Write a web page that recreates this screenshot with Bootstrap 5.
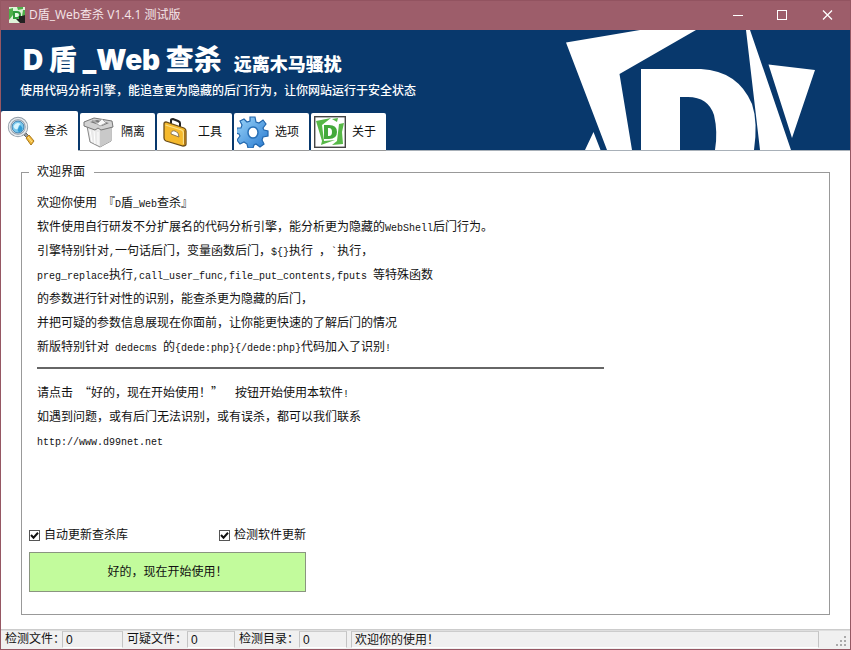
<!DOCTYPE html>
<html lang="zh-CN">
<head>
<meta charset="utf-8">
<meta name="viewport" content="width=device-width, initial-scale=1">
<title>D盾_Web查杀 V1.4.1 测试版</title>
<link href="https://cdn.jsdelivr.net/npm/bootstrap@5.3.0/dist/css/bootstrap.min.css" rel="stylesheet">
<style>
body{font:12px/16px "Liberation Sans","Noto Sans CJK SC",sans-serif;color:#111}
.win{border:1px solid #965763;border-top:0}
.titlebar{background:#9d5d6a;height:30px;color:#f5e6e9;font-family:"Open Sans","Noto Sans CJK SC",sans-serif;box-shadow:inset 0 1px #925360}
.titlebar h1{font-size:12px;line-height:20px}
.winbtn{width:45px;height:30px;border:0;background:none;color:#fff;padding:0}
.banner{background:#08386c;height:121px;color:#fff;border-bottom:1px solid #a8b0b8}
.heading{padding:14px 0 0 22px}
.brand{font:900 28px/32px Inter,"Noto Sans CJK SC",sans-serif}
.slogan{font:900 18px/26px "Noto Sans CJK SC",sans-serif}
.sub{font-family:"Noto Sans CJK SC",sans-serif;font-weight:500;line-height:16px;padding:6px 0 0 19px}
.logo{width:290px;height:120px}
.tabs{gap:2px;margin-bottom:-1px}
.tabbtn{width:75px;height:38px;border:0;border-bottom:1px solid #999;border-radius:2px 2px 0 0;background:#fff;color:#111;padding:0 10px 0 3px}
.tabbtn.active{width:77px;height:40px;border-bottom-color:#fff;padding:0 10px 0 6px}
.group{border:1px solid #999;margin:13px 20px 14px 20px;padding:0 7px 20px}
.group legend{float:none;width:auto;font-size:12px;line-height:16px;margin:0;padding:0 9px 0 8px}
.txt{font-family:"Noto Sans CJK SC",sans-serif;line-height:24px;padding:10px 8px 0}
.txt code{font:10px "Liberation Mono",monospace;color:inherit;white-space:pre}
.txt a{color:inherit;text-decoration:none}
.txt hr{max-width:567px;margin:9px 0 11px;border-top:2px solid #666;opacity:1}
.opts{max-width:277px;line-height:18px;margin-top:74px}
.opts label{gap:4px}
.tick{appearance:none;width:11px;height:11px;margin:0;border:1px solid #555;background:#fff}
.tick:checked{background:#fff url("data:image/svg+xml,%3Csvg xmlns='http://www.w3.org/2000/svg' viewBox='0 0 9 9'%3E%3Cpath d='M1 4l2.5 2.7L8 1.8' fill='none' stroke='%23111' stroke-width='2'/%3E%3C/svg%3E")}
.start{width:277px;max-width:100%;height:40px;border:1px solid #8a9580;background:#c2fb9c;color:#111}
.status{background:#f0f0f0;height:20px;border-top:1px solid #ccc;box-shadow:inset 0 1px #dedede;padding:1px 3px 0 4px}
.cell{border:1px solid;border-color:#ccc #c4c4c4 #fff #c4c4c4;height:17px;padding-left:3px;line-height:16px}
.lab{width:57px}
.lab2{width:64px}
.w1{width:61px}
.w2{width:48px}
</style>
<script src="https://cdn.jsdelivr.net/npm/bootstrap@5.3.0/dist/js/bootstrap.bundle.min.js"></script>
</head>
<body>
<div class="win min-vh-100 d-flex flex-column bg-white">
  <header class="titlebar d-flex align-items-center ps-2">
    <svg width="16" height="16" viewBox="0 0 16 16" aria-hidden="true"><rect width="16" height="16" fill="#dff3d8"/><path d="M0 2l4-1 0 7-4 5zM8 0h6v2l-5 1zM14 3h2v6h-3z" fill="#4fae49"/><path d="M4 4h4q4 0 4 4t-4 4H4z" fill="#2f9a3a"/><path d="M6 6h2q2 0 2 2t-2 2H6z" fill="#e8f8e4"/><path d="M7 12h3V9h3l3-1v8h-5z" fill="#222"/></svg>
    <h1 class="mb-0 fw-normal flex-grow-1 ms-1">D盾_Web查杀 V1.4.1 测试版</h1>
    <button class="winbtn" aria-label="最小化"><svg width="12" height="12" viewBox="0 0 12 12" stroke="#fff" fill="none"><path d="M1 5.500h10"/></svg></button>
    <button class="winbtn" aria-label="最大化"><svg width="12" height="12" viewBox="0 0 12 12" stroke="#fff" fill="none"><rect x=".5" y=".5" width="9" height="9"/></svg></button>
    <button class="winbtn" aria-label="关闭"><svg width="12" height="12" viewBox="0 0 12 12" stroke="#fff" stroke-width="1.300" fill="none"><path d="M1 .5l9 9M10 .5l-9 9"/></svg></button>
  </header>

  <div class="banner d-flex justify-content-between">
    <div class="d-flex flex-column text-nowrap">
      <div class="heading d-flex align-items-end">
        <div class="brand">D 盾 _Web 查杀</div>
        <div class="slogan ms-2 ps-1">远离木马骚扰</div>
      </div>
      <div class="sub">使用代码分析引擎，能追查更为隐藏的后门行为，让你网站运行于安全状态</div>
      <nav class="tabs d-flex align-items-end mt-auto" role="tablist">
        <button class="tabbtn active d-flex align-items-center justify-content-between" role="tab" aria-selected="true">
          <svg width="30" height="30" viewBox="0 0 30 30"><path d="M17 19l2-2 3 3-2 2z" fill="#999" stroke="#666"/><path d="M19 22l3-3 5 6-3 4z" fill="#f2b93a" stroke="#a8781c"/><path d="M21 21l4 5" stroke="#ffe596"/><circle cx="11" cy="11" r="8.500" fill="#fff" stroke="#8f9ba6" stroke-width="3.400"/><circle cx="11" cy="11" r="8.500" fill="none" stroke="#e6eaee" stroke-width="1.700"/><circle cx="11" cy="11" r="6" fill="#79c7ec" stroke="#397cac"/><path d="M6.500 10q3-5 7-2-2 1-3 5-3 1-4-3z" fill="#d6f5ff"/><path d="M13 9q5 4 0 7-3 0-2-3z" fill="#2f9cd6"/></svg>
          <span>查杀</span></button>
        <button class="tabbtn d-flex align-items-center justify-content-between" role="tab" aria-selected="false">
          <svg width="32" height="32" viewBox="0 0 32 32"><path d="M4 10l3 16 10 5 11-6V9z" fill="#e9e9e9" stroke="#888"/><path d="M17 13v18l11-6V9z" fill="#c9c9c9"/><path d="M1 6l10-4 18 3 1 6-12 3-3-2-3 2L1 10z" fill="#d2d2d2" stroke="#777"/><path d="M7 6l7-2 12 3-7 3z" fill="#777"/><path d="M9 4l6 3 4-4 4 4-6 3z" fill="#f8f8f8" stroke="#aaa"/><path d="M7 14l2 12M11 15l1 13M15 16v13" stroke="#fff"/></svg>
          <span>隔离</span></button>
        <button class="tabbtn d-flex align-items-center justify-content-between" role="tab" aria-selected="false">
          <svg width="30" height="30" viewBox="0 0 30 30"><path d="M11 8V3q0-1 2-1l5 2q2 1 2 2v5" fill="none" stroke="#222" stroke-width="2"/><path d="M4 7q0-2 2-2l18 6q2 1 2 3v13q0 2-3 2L6 24q-2-1-2-3z" fill="#f5b92d" stroke="#6b4d18" stroke-width="1.300"/><path d="M5.500 8l16 5q2 1 2 3v11" fill="none" stroke="#fbe18a" stroke-width="1.300"/><path d="M24 13l2 1v13l-2 1z" fill="#a87419"/><path d="M11 17q0-4 4-3 4 1 4 6z" fill="#fff" stroke="#8c7850"/></svg>
          <span>工具</span></button>
        <button class="tabbtn d-flex align-items-center justify-content-between" role="tab" aria-selected="false">
          <svg width="32" height="32" viewBox="0 0 32 32"><defs><linearGradient id="gear" x2="1" y2="1"><stop stop-color="#9dd7fb"/><stop offset="1" stop-color="#2678cf"/></linearGradient></defs><path d="M13 1h5l1 5 3 1 4-3 3 4-3 4 1 2 4 1v5l-5 1-1 3 2 4-4 3-4-3-2 1-1 3h-5l-1-4-3-2-4 2-3-4 3-4-1-2-3-1 1-5 4 0 1-3-2-4 4-2 3 3 3-1z" fill="url(#gear)" stroke="#2267ad" stroke-width="1.200"/><ellipse cx="16" cy="16.500" rx="5" ry="5.500" fill="#fff" stroke="#2870b6" stroke-width="1.500"/></svg>
          <span>选项</span></button>
        <button class="tabbtn d-flex align-items-center justify-content-between" role="tab" aria-selected="false">
          <svg width="32" height="32" viewBox="0 0 32 32"><rect x=".7" y=".7" width="30.600" height="30.600" fill="#fff" stroke="#444" stroke-width="1.400"/><path d="M2 5L17 2 8 9l2 16 11-1-14 5 1-4zM18 3l6-1-1 4zM25 8l5-1-2 9 1 12-11 1 5-4z" fill="#57b847"/><path fill-rule="evenodd" d="M10 9h5q8 0 8 7t-8 7h-5zM14 12v8h1q3 0 3-4t-3-4z" fill="#43a93b"/></svg>
          <span>关于</span></button>
      </nav>
    </div>
    <svg class="logo flex-shrink-0" viewBox="560 30 290 120" fill="#fff" aria-hidden="true">
      <path d="M566 42.500L640 30h56L619.500 74 632 150h-25zM585 150l8.500-18 7 18zM746 30h4l41 120h-31zM768.500 64.500L815 70l-23 68z"/>
      <path fill-rule="evenodd" d="M641 69h60q37 2 51 35 6 18 2 46h-39q3-18-1-35-6-18-26-18h-8v53h-39z"/>
    </svg>
  </div>

  <main class="flex-grow-1 d-flex flex-column">
    <fieldset class="group flex-grow-1">
      <legend>欢迎界面</legend>
      <div class="txt">
        <div>欢迎你使用<code> </code>『<code>D</code>盾<code>_Web</code>查杀』</div>
        <div>软件使用自行研发不分扩展名的代码分析引擎，能分析更为隐藏的<code>WebShell</code>后门行为。</div>
        <div>引擎特别针对<code>,</code>一句话后门，变量函数后门，<code>${}</code>执行<code> </code>，<code>`</code>执行，</div>
        <div><code>preg_replace</code>执行<code>,call_user_func,file_put_contents,fputs </code>等特殊函数</div>
        <div>的参数进行针对性的识别，能查杀更为隐藏的后门，</div>
        <div>并把可疑的参数信息展现在你面前，让你能更快速的了解后门的情况</div>
        <div>新版特别针对<code> dedecms </code>的<code>{dede:php}{/dede:php}</code>代码加入了识别<code>!</code></div>
        <hr>
        <div>请点击<code> </code>“好的，现在开始使用！”<code>  </code>按钮开始使用本软件<code>!</code></div>
        <div>如遇到问题，或有后门无法识别，或有误杀，都可以我们联系</div>
        <div><a href="http://www.d99net.net"><code>http://www.d99net.net</code></a></div>
      </div>
      <div class="opts d-flex justify-content-between mb-2">
        <label class="d-flex align-items-center"><input class="tick" type="checkbox" checked>自动更新查杀库</label>
        <label class="d-flex align-items-center"><input class="tick" type="checkbox" checked>检测软件更新</label>
      </div>
      <button class="start">好的，现在开始使用！</button>
    </fieldset>
  </main>

  <footer class="status d-flex text-nowrap">
    <span class="lab">检测文件：</span><span class="cell w1">0</span>
    <span class="lab2 ps-1">可疑文件：</span><span class="cell w2">0</span>
    <span class="lab2 ps-1">检测目录：</span><span class="cell w2">0</span>
    <span class="cell flex-grow-1 ms-1">欢迎你的使用！</span>
    <svg class="ms-3 align-self-end" width="12" height="14" viewBox="0 0 12 14" fill="#aaa" aria-hidden="true"><path d="M9 1h2v2H9zM5 5h2v2H5zM9 5h2v2H9zM1 9h2v2H1zM5 9h2v2H5zM9 9h2v2H9z"/></svg>
  </footer>
</div>
</body>
</html>
